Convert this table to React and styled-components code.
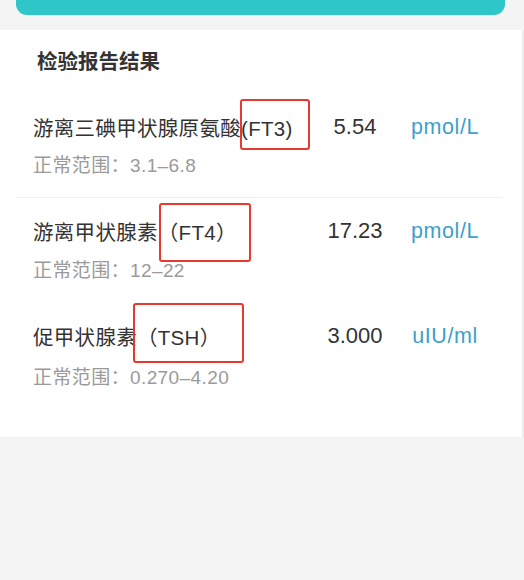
import React from 'react';
import styled, { createGlobalStyle } from 'styled-components';

const GlobalStyle = createGlobalStyle`
  html, body {
    margin: 0;
    padding: 0;
    background: #f4f4f4;
  }
  body {
    font-family: "Liberation Sans", "Noto Sans CJK SC", sans-serif;
  }
`;

const Page = styled.div`
  width: 524px;
  height: 580px;
  background: #f4f4f4;
  display: flex;
  flex-direction: column;
`;

const TopBar = styled.div`
  height: 15px;
  margin: 0 19px 0 16px;
  background: #2fc6c9;
  border-radius: 0 0 11px 11px;
`;

const Card = styled.div`
  margin-top: 15px;
  background: #ffffff;
  border-right: 2px solid #ececec;
  padding: 18px 0 27px;
`;

const Title = styled.div`
  padding-left: 37px;
  font-size: 20.5px;
  line-height: 28px;
  font-weight: 700;
  color: #333333;
`;

const List = styled.div`
  margin-top: 18px;
  display: flex;
  flex-direction: column;
`;

const Row = styled.div`
  position: relative;
  padding: 18px 0;
  margin: 0 20px 0 16px;
  border-bottom: 1px solid ${({ $divider }) => ($divider ? '#efefef' : 'transparent')};
`;

const MainLine = styled.div`
  display: grid;
  grid-template-columns: 1fr 80px 80px;
  column-gap: 10px;
  align-items: center;
  padding-left: 17px;
  padding-right: 17px;
  height: 30px;
`;

const Name = styled.div`
  font-size: 20.5px;
  color: #333333;
  white-space: nowrap;
  letter-spacing: 0.3px;
`;

const Value = styled.div`
  font-size: 22px;
  color: #333333;
  text-align: center;
`;

const Unit = styled.div`
  font-size: 21.5px;
  letter-spacing: 0.6px;
  color: #3d9fca;
  text-align: center;
  white-space: nowrap;
`;

const Range = styled.div`
  margin-top: ${({ $gap }) => $gap}px;
  padding-left: 17px;
  font-size: 19px;
  line-height: 26px;
  letter-spacing: 0.4px;
  color: #9a9a9a;
`;

const Marker = styled.div`
  position: absolute;
  border: 2px solid #e63a30;
  border-radius: 3px;
  pointer-events: none;
`;

const items = [
  {
    name: '游离三碘甲状腺原氨酸(FT3)',
    value: '5.54',
    unit: 'pmol/L',
    range: '正常范围：3.1–6.8',
    gap: 11,
    divider: true,
    box: { left: 224, top: 5, width: 66, height: 47 },
  },
  {
    name: '游离甲状腺素（FT4）',
    value: '17.23',
    unit: 'pmol/L',
    range: '正常范围：12–22',
    gap: 12,
    divider: false,
    box: { left: 143, top: 5, width: 88, height: 55 },
  },
  {
    name: '促甲状腺素（TSH）',
    value: '3.000',
    unit: 'uIU/ml',
    range: '正常范围：0.270–4.20',
    gap: 14,
    divider: false,
    box: { left: 117, top: 0, width: 107, height: 56 },
  },
];

const App = () => {
  return (
    <Page>
      <GlobalStyle />
      <TopBar />
      <Card>
        <Title>检验报告结果</Title>
        <List>
          {items.map((item, i) => (
            <Row key={i} $divider={item.divider}>
              <MainLine>
                <Name>{item.name}</Name>
                <Value>{item.value}</Value>
                <Unit>{item.unit}</Unit>
              </MainLine>
              <Range $gap={item.gap}>{item.range}</Range>
              <Marker
                style={{
                  left: item.box.left,
                  top: item.box.top,
                  width: item.box.width,
                  height: item.box.height,
                }}
              />
            </Row>
          ))}
        </List>
      </Card>
    </Page>
  );
};

export default App;
